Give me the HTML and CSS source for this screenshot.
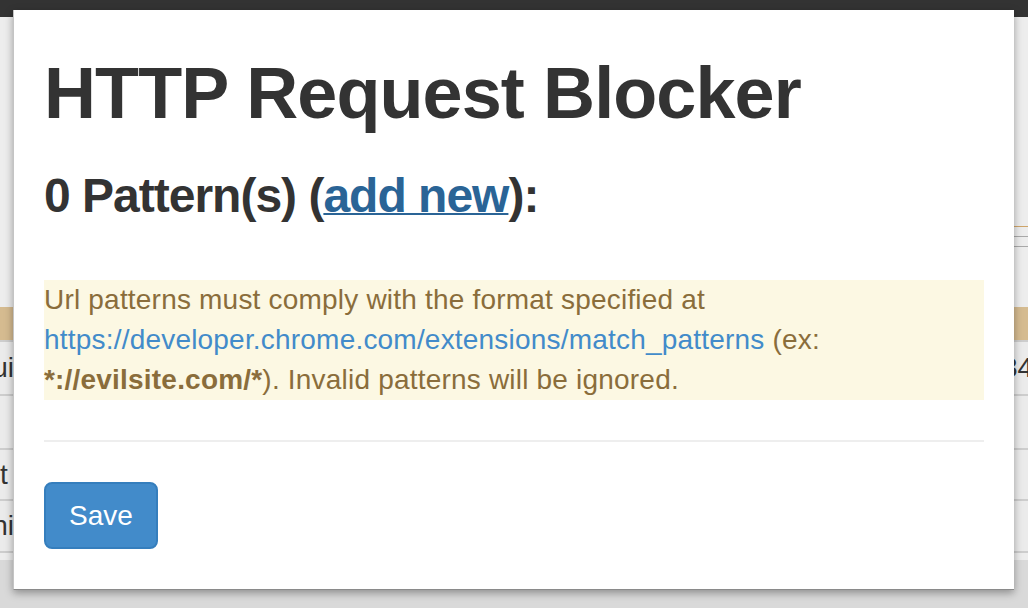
FILE: index.html
```html
<!DOCTYPE html>
<html lang="en">
<head>
<meta charset="utf-8">
<title>HTTP Request Blocker</title>
<link rel="stylesheet" href="styles.css">
</head>
<body>
<div class="backdrop">
  <div class="navbar"></div>
  <div class="page">
    <div class="toolbar">
      <div class="tool-field"><span class="tl tl-accent"></span><span class="tl"></span><span class="tl"></span></div>
    </div>
    <div class="table">
      <div class="thead"></div>
      <div class="row"><span class="cell-l">Gui</span><span class="cell-r">34</span></div>
      <div class="row"><span class="cell-l"></span><span class="cell-r"></span></div>
      <div class="row"><span class="cell-l cell-start">t</span><span class="cell-r"></span></div>
      <div class="row"><span class="cell-l">Chi</span><span class="cell-r"></span></div>
    </div>
  </div>
  <div class="floor"></div>
</div>

<div class="popup">
  <h1 class="title">HTTP Request Blocker</h1>
  <h3 class="subtitle">0 Pattern(s) (<a href="#" class="add-link">add new</a>):</h3>
  <p class="notice">Url patterns must comply with the format specified at <a href="#" class="notice-link">https://developer.chrome.com/extensions/match_patterns</a> (ex: <strong>*://evilsite.com/*</strong>). Invalid patterns will be ignored.</p>
  <hr class="divider">
  <button class="btn-save" type="button">Save</button>
</div>
</body>
</html>
```

FILE: styles.css
```css
html, body {
  margin: 0;
  padding: 0;
}

body {
  width: 1028px;
  height: 608px;
  overflow: hidden;
  background: #d9d9d9;
  font-family: "Liberation Sans", Arial, Helvetica, sans-serif;
  color: #333;
  position: relative;
}

/* ---------- background page ---------- */
.backdrop {
  display: flex;
  flex-direction: column;
  height: 608px;
}

.navbar {
  height: 17px;
  background: #333333;
  flex: none;
}

.page {
  height: 543px;
  background: #ededed;
  display: flex;
  flex-direction: column;
  flex: none;
}

.toolbar {
  margin-top: 209px;
  display: flex;
  justify-content: flex-end;
}

.tool-field {
  width: 200px;
  display: flex;
  flex-direction: column;
  gap: 9px;
}

.tl {
  display: block;
  height: 1px;
  background: #a9a9a9;
}

.tl-accent {
  background: #cfa56a;
}

.table {
  margin-top: 60px;
  display: flex;
  flex-direction: column;
}

.thead {
  height: 33px;
  background: #d5bb90;
}

.row {
  display: flex;
  justify-content: space-between;
  align-items: center;
  border-top: 2px solid #cdcdcd;
  font-size: 28px;
  color: #333;
  background: #ebebeb;
}

.row:nth-child(2) { height: 52px; }
.row:nth-child(3) { height: 52px; }
.row:nth-child(4) { height: 49px; }
.row:nth-child(5) { height: 50px; border-bottom: 2px solid #cdcdcd; }

.cell-l {
  width: 14px;
  display: flex;
  justify-content: flex-end;
  overflow: hidden;
  white-space: nowrap;
}

.cell-start {
  justify-content: flex-start;
}

.cell-r {
  width: 26px;
  overflow: hidden;
  white-space: nowrap;
}

.floor {
  flex: 1;
  background: #d9d9d9;
}

/* ---------- popup ---------- */
.popup {
  position: absolute;
  left: 13px;
  top: 10px;
  width: 1001px;
  height: 580px;
  box-sizing: border-box;
  padding: 0 30px;
  background: #ffffff;
  border-left: 1px solid #c4c4c4;
  border-bottom: 1px solid #8a8a8a;
  box-shadow: 0 3px 8px rgba(0, 0, 0, 0.35);
}

.title {
  margin: 44px 0 0;
  font-size: 72px;
  line-height: 79px;
  font-weight: 700;
  letter-spacing: -0.9px;
  color: #333;
}

.subtitle {
  margin: 36px 0 58px;
  font-size: 48px;
  line-height: 53px;
  font-weight: 700;
  letter-spacing: -1px;
  color: #333;
}

.add-link {
  color: #2a6496;
  text-decoration: underline;
  text-decoration-thickness: 2px;
}

.notice {
  margin: 0;
  background: #fcf8e3;
  color: #8a6d3b;
  font-size: 28px;
  line-height: 40px;
  letter-spacing: 0.2px;
}

.notice-link {
  color: #428bca;
  text-decoration: none;
}

.notice strong {
  font-weight: 700;
}

.divider {
  margin: 40px 0 0;
  border: 0;
  border-top: 2px solid #eeeeee;
  height: 0;
}

.btn-save {
  margin-top: 40px;
  display: block;
  padding: 12px 23px 11px;
  font-family: inherit;
  font-size: 28px;
  line-height: 40px;
  color: #ffffff;
  background: #428bca;
  border: 2px solid #357ebd;
  border-radius: 8px;
}
```
